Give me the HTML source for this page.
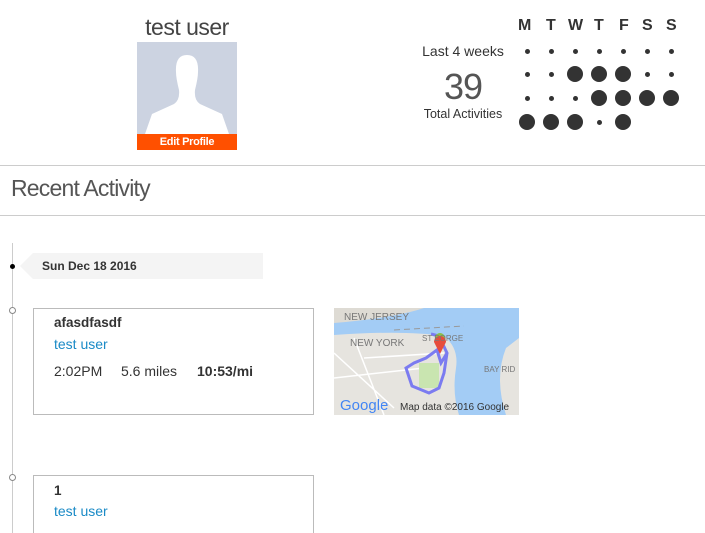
<!DOCTYPE html>
<html><head><style>
html,body{margin:0;width:705px;height:533px;overflow:hidden}
body{background:#fff;font-family:"Liberation Sans",sans-serif;color:#222;position:relative}
.a{position:absolute}
.d{position:absolute;background:#333;border-radius:50%}
</style></head><body>
<div class="a" style="left:127px;top:14px;width:120px;text-align:center;font-size:23px;color:#444;letter-spacing:-0.5px">test user</div>
<div class="a" style="left:137px;top:42px;width:100px;height:108px;background:#ccd3e1">
<svg width="100" height="92" viewBox="0 0 100 92" style="position:absolute;left:0;top:0"><path d="M39 30 Q38 13 50 13 Q62 13 61 30 Q61 36 58 48 Q57 58 63 62 L85 72 L92 92 L8 92 L15 72 L37 62 Q43 58 42 48 Q39 36 39 30Z" fill="#fff"/></svg>
<div class="a" style="left:0;top:92px;width:100px;height:16px;background:#ff5000;color:#fff;font-size:11px;text-align:center;line-height:16px;font-weight:bold;letter-spacing:-0.3px">Edit Profile</div></div>
<div class="a" style="left:413px;top:43px;width:100px;text-align:center;font-size:14px;color:#333">Last 4 weeks</div>
<div class="a" style="left:418px;top:66px;width:90px;text-align:center;font-size:36px;color:#555;letter-spacing:-1px">39</div>
<div class="a" style="left:413px;top:107px;width:100px;text-align:center;font-size:12.5px;color:#333">Total Activities</div>
<div class="a" style="left:515px;top:17px;font-size:16px;font-weight:bold;color:#333">
<span class="a" style="left:3px">M</span><span class="a" style="left:31px">T</span><span class="a" style="left:53px">W</span><span class="a" style="left:79px">T</span><span class="a" style="left:104px">F</span><span class="a" style="left:127px">S</span><span class="a" style="left:151px">S</span></div>
<div id="g"></div>
<script>
var rows=["sssssss","ssLLLss","sssLLLL","LLLsL"],y=[51,74,98,122],h="";
rows.forEach(function(r,i){for(var j=0;j<r.length;j++){var cx=527+24*j,rr=r[j]=="L"?8:2.5;h+='<div class="d" style="left:'+(cx-rr)+'px;top:'+(y[i]-rr)+'px;width:'+2*rr+'px;height:'+2*rr+'px"></div>'}});
document.getElementById("g").innerHTML=h;
</script>
<div class="a" style="left:0;top:165px;width:705px;height:1px;background:#ccc"></div>
<div class="a" style="left:11px;top:175px;font-size:23px;color:#555;letter-spacing:-0.8px">Recent Activity</div>
<div class="a" style="left:0;top:215px;width:705px;height:1px;background:#ccc"></div>
<div class="a" style="left:12px;top:243px;width:1px;height:290px;background:#ccc"></div>
<div class="a" style="left:10px;top:264px;width:5px;height:5px;border-radius:50%;background:#000"></div>
<div class="a" style="left:9px;top:307px;width:5px;height:5px;border-radius:50%;border:1px solid #888;background:#fff"></div>
<div class="a" style="left:9px;top:474px;width:5px;height:5px;border-radius:50%;border:1px solid #888;background:#fff"></div>
<svg class="a" style="left:20px;top:253px" width="243" height="26"><path d="M13 0H243V26H13L0 13Z" fill="#f4f4f4"/></svg>
<div class="a" style="left:42px;top:259px;font-size:12px;font-weight:bold;color:#333">Sun Dec 18 2016</div>
<div class="a" style="left:33px;top:308px;width:279px;height:105px;border:1px solid #bbb"></div>
<div class="a" style="left:54px;top:315px;font-size:13.5px;font-weight:bold;color:#333">afasdfasdf</div>
<div class="a" style="left:54px;top:336px;font-size:14px;color:#1a8ac6">test user</div>
<div class="a" style="left:54px;top:363px;font-size:14px;color:#333">2:02PM</div>
<div class="a" style="left:121px;top:363px;font-size:14px;color:#333">5.6 miles</div>
<div class="a" style="left:197px;top:363px;font-size:14px;font-weight:bold;color:#333">10:53/mi</div>
<svg class="a" style="left:334px;top:308px" width="185" height="107" viewBox="0 0 185 107">
<rect width="185" height="107" fill="#e6e4df"/>
<path d="M0 0H185V107H125Q118 85 122 60Q125 40 110 28Q70 22 0 27Z" fill="#a3ccf5"/>
<path d="M0 0H90Q60 10 0 15Z" fill="#dedbd4"/>
<path d="M172 40Q160 70 172 107H185V30Z" fill="#e6e4df"/>
<path d="M60 22L130 18" stroke="#999" stroke-dasharray="6 4"/>
<path d="M0 45L60 100M20 30L50 107M0 70L90 60M30 50L110 45" stroke="#fff" stroke-width="1.5"/>
<rect x="85" y="55" width="20" height="25" fill="#c9e5b0"/>
<path d="M97 26L105 28 113 45 107 55 103 42 92 50 80 55 72 60 78 78 95 85 105 80 110 65 113 45" fill="none" stroke="#7b7bf0" stroke-width="3"/>
<circle cx="106" cy="30" r="5" fill="#8bbf4a"/>
<path d="M106 46L100 34A6 6 0 1 1 112 34Z" fill="#e74c3c"/>
<text x="10" y="12" font-size="10" fill="#777" font-family="Liberation Sans">NEW JERSEY</text>
<text x="16" y="38" font-size="10" fill="#777" font-family="Liberation Sans">NEW YORK</text>
<text x="88" y="33" font-size="8" fill="#777" font-family="Liberation Sans">ST  EORGE</text>
<text x="150" y="64" font-size="8" fill="#777" font-family="Liberation Sans">BAY RID</text>
<text x="6" y="102" font-size="15" fill="#4285f4" font-family="Liberation Sans">Google</text>
<text x="66" y="102" font-size="10" fill="#333" font-family="Liberation Sans">Map data ©2016 Google</text>
</svg>
<div class="a" style="left:33px;top:475px;width:279px;height:58px;border:1px solid #bbb;border-bottom:none;box-sizing:border-box;width:281px"></div>
<div class="a" style="left:54px;top:483px;font-size:13.5px;font-weight:bold;color:#333">1</div>
<div class="a" style="left:54px;top:503px;font-size:14px;color:#1a8ac6">test user</div>
</body></html>
